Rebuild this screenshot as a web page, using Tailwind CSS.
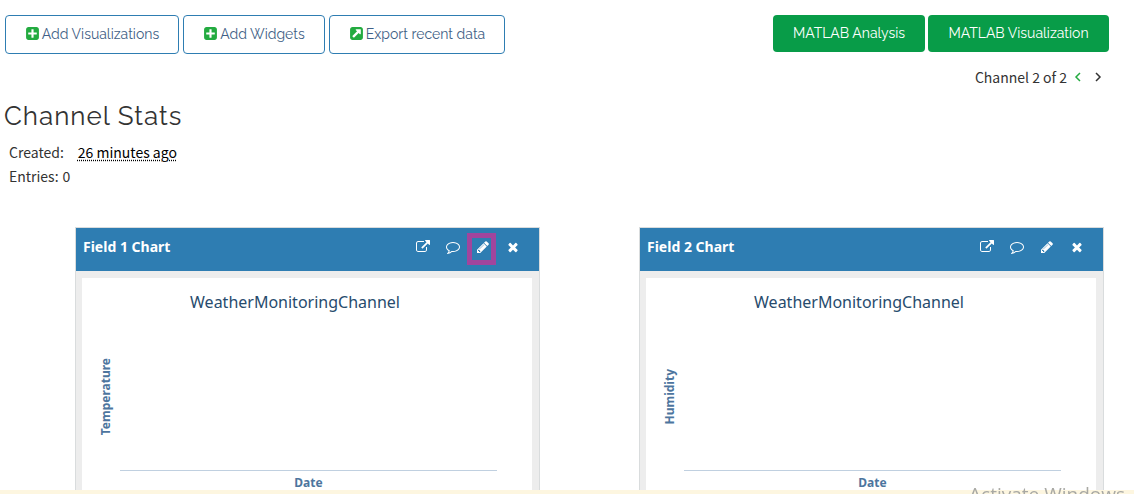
<!DOCTYPE html>
<html lang="en">
<head>
<meta charset="utf-8">
<meta name="viewport" content="width=device-width, initial-scale=1">
<title>Channel Stats</title>
<script src="https://cdn.jsdelivr.net/npm/@tailwindcss/browser@4"></script>
</head>
<body class="bg-white font-['Noto_Sans_CJK_SC','Noto_Sans',sans-serif] text-[14px] leading-6 text-[#333]">
<svg class="hidden" aria-hidden="true">
  <symbol id="plus-square" viewBox="0 0 1792 1792"><path d="M1408 960v-128q0-26-19-45t-45-19h-320v-320q0-26-19-45t-45-19h-128q-26 0-45 19t-19 45v320h-320q-26 0-45 19t-19 45v128q0 26 19 45t45 19h320v320q0 26 19 45t45 19h128q26 0 45-19t19-45v-320h320q26 0 45-19t19-45zm256-544v960q0 119-84.500 203.500t-203.500 84.500h-960q-119 0-203.500-84.500t-84.500-203.500v-960q0-119 84.500-203.500t203.500-84.500h960q119 0 203.500 84.500t84.500 203.500z"/></symbol>
  <symbol id="export-square" viewBox="0 0 1792 1792"><path d="M1408 928v-480q0-26-19-45t-45-19h-480q-42 0-59 39-17 41 14 70l144 144-534 534q-19 19-19 45t19 45l102 102q19 19 45 19t45-19l534-534 144 144q18 19 45 19 12 0 25-5 39-17 39-59zm256-512v960q0 119-84.500 203.500t-203.500 84.500h-960q-119 0-203.500-84.500t-84.500-203.500v-960q0-119 84.500-203.500t203.500-84.500h960q119 0 203.500 84.500t84.500 203.500z"/></symbol>
  <symbol id="external-link" viewBox="0 0 1792 1792"><path d="M1408 928v320q0 119-84.500 203.500t-203.500 84.500h-832q-119 0-203.500-84.500t-84.500-203.500v-832q0-119 84.500-203.500t203.500-84.500h704q14 0 23 9t9 23v64q0 14-9 23t-23 9h-704q-66 0-113 47t-47 113v832q0 66 47 113t113 47h832q66 0 113-47t47-113v-320q0-14 9-23t23-9h64q14 0 23 9t9 23zm384-864v512q0 26-19 45t-45 19-45-19l-176-176-652 652q-10 10-23 10t-23-10l-114-114q-10-10-10-23t10-23l652-652-176-176q-19-19-19-45t19-45 45-19h512q26 0 45 19t19 45z"/></symbol>
  <symbol id="comment" viewBox="0 0 1792 1792"><path d="M896 384q-204 0-381.500 69.500t-282 187.500-104.500 255q0 112 71.500 213.500t201.500 175.500l87 50-27 96q-24 91-70 172 152-63 275-171l43-38 57 6q69 8 130 8 204 0 381.500-69.500t282-187.500 104.500-255-104.500-255-282-187.500-381.500-69.500zm896 512q0 174-120 321.500t-326 233-450 85.500q-70 0-145-8-198 175-460 242-49 14-114 22h-5q-15 0-27-10.500t-16-27.500v-1q-3-4-.5-12t2-10 4.500-9.500l6-9 7-8.500 8-9q7-8 31-34.500t34.500-38 31-39.500 32.500-51 27-59 26-76q-157-89-247.500-220t-90.500-281q0-174 120-321.500t326-233 450-85.500 450 85.500 326 233 120 321.500z"/></symbol>
  <symbol id="pencil" viewBox="0 0 1792 1792"><path d="M491 1536l91-91-235-235-91 91v107h128v128h107zm523-928q0-22-22-22-10 0-17 7l-542 542q-7 7-7 17 0 22 22 22 10 0 17-7l542-542q7-7 7-17zm-54-192l416 416-832 832h-416v-416zm683 96q0 53-37 90l-166 166-416-416 166-165q36-38 90-38 53 0 91 38l235 234q37 39 37 91z"/></symbol>
  <symbol id="times" viewBox="0 0 1792 1792"><path d="M1490 1322q0 40-28 68l-136 136q-28 28-68 28t-68-28l-294-294-294 294q-28 28-68 28t-68-28l-136-136q-28-28-28-68t28-68l294-294-294-294q-28-28-28-68t28-68l136-136q28-28 68-28t68 28l294 294 294-294q28-28 68-28t68 28l136 136q28 28 28 68t-28 68l-294 294 294 294q28 28 28 68z"/></symbol>
</svg>

<header class="flex items-start justify-between pt-[15px] pr-[25px] pl-[5px] font-[Raleway,Lato,sans-serif] text-[14px] leading-5">
  <div class="flex gap-1">
    <button class="flex h-[39px] w-[174px] items-center justify-center gap-0.5 rounded border border-[#2e7db2] pb-0.5 whitespace-nowrap text-[#3f5f86]"><svg class="size-[15px] fill-[#23ab40]"><use href="#plus-square"/></svg>Add Visualizations</button>
    <button class="flex h-[39px] w-[142px] items-center justify-center gap-0.5 rounded border border-[#2e7db2] pb-0.5 whitespace-nowrap text-[#3f5f86]"><svg class="size-[15px] fill-[#23ab40]"><use href="#plus-square"/></svg>Add Widgets</button>
    <button class="flex h-[39px] w-[176px] items-center justify-center gap-0.5 rounded border border-[#2e7db2] pb-0.5 whitespace-nowrap text-[#3f5f86]"><svg class="size-[15px] fill-[#23ab40]"><use href="#export-square"/></svg>Export recent data</button>
  </div>
  <div class="flex gap-[3px]">
    <button class="h-[37px] w-[152px] rounded bg-[#089c48] pb-0.5 whitespace-nowrap text-white">MATLAB Analysis</button>
    <button class="h-[37px] w-[181px] rounded bg-[#089c48] pb-0.5 whitespace-nowrap text-white">MATLAB Visualization</button>
  </div>
</header>

<nav class="flex items-center justify-end pt-[11px] pr-[32px]" aria-label="Channels">
  <span>Channel 2 of 2</span>
  <a href="#" aria-label="Previous channel" class="ml-[7px]"><svg class="h-[10px] w-[8px] fill-none stroke-[#23ab40] stroke-[1.5]" viewBox="0 0 8 10"><path d="M6 1L2 5l4 4"/></svg></a>
  <a href="#" aria-label="Next channel" class="ml-[12px]"><svg class="h-[10px] w-[8px] fill-none stroke-[#333] stroke-[1.5]" viewBox="0 0 8 10"><path d="M2 1l4 4-4 4"/></svg></a>
</nav>

<section class="pt-[12px] pl-1">
  <h1 class="font-[Raleway,Lato,sans-serif] text-[26px] leading-[30px] tracking-[1px]">Channel Stats</h1>
  <dl class="pt-[9px] pl-[5px]">
    <div class="flex gap-[14px]"><dt>Created:</dt><dd><abbr title="Creation time" class="text-black underline decoration-dotted underline-offset-2">26 minutes ago</abbr></dd></div>
    <div class="flex gap-1"><dt>Entries:</dt><dd>0</dd></div>
  </dl>
</section>

<main class="grid grid-cols-2 gap-[99px] pt-[39px] pr-[30px] pl-[75px]">
  <article class="border border-[#d9dcdd] bg-[#ededed]">
    <header class="flex h-[43px] items-start justify-between bg-[#2e7db2] pr-[19px] pl-[7px] text-white">
      <h2 class="pt-[7px] font-['Noto_Sans',sans-serif] text-[14px] leading-6 font-bold">Field 1 Chart</h2>
      <div class="flex gap-4 pt-[12px]">
        <button aria-label="Open chart"><svg class="size-[14px] fill-white"><use href="#external-link"/></svg></button>
        <button aria-label="Comments"><svg class="size-[14px] fill-white"><use href="#comment"/></svg></button>
        <button aria-label="Edit chart" class="relative"><svg class="size-[14px] fill-white"><use href="#pencil"/></svg><span class="absolute -top-[7px] -left-[9px] h-8 w-[29px] border-[5px] border-[#a1459d]"></span></button>
        <button aria-label="Close chart"><svg class="size-[14px] fill-white"><use href="#times"/></svg></button>
      </div>
    </header>
    <div class="pt-[7px] pr-[7px] pl-[6px]">
      <div class="h-[214px] bg-white font-['Noto_Sans',sans-serif]">
        <h3 class="pt-[12px] pr-6 text-center text-[16px] leading-6 text-[#274b6d]">WeatherMonitoringChannel</h3>
        <div class="flex h-[157px] pr-[35px]">
          <div class="flex w-[38px] items-center justify-end pt-[8px] pr-[6px]"><span class="rotate-180 text-[12px] leading-4 font-bold text-[#4d759e] [writing-mode:vertical-rl]">Temperature</span></div>
          <div class="flex-1 border-b border-[#c0d0e0]"></div>
        </div>
        <p class="pt-[4px] pr-[35px] pl-[38px] text-center text-[12px] leading-4 font-bold text-[#4d759e]">Date</p>
      </div>
    </div>
  </article>
  <article class="border border-[#d9dcdd] bg-[#ededed]">
    <header class="flex h-[43px] items-start justify-between bg-[#2e7db2] pr-[19px] pl-[7px] text-white">
      <h2 class="pt-[7px] font-['Noto_Sans',sans-serif] text-[14px] leading-6 font-bold">Field 2 Chart</h2>
      <div class="flex gap-4 pt-[12px]">
        <button aria-label="Open chart"><svg class="size-[14px] fill-white"><use href="#external-link"/></svg></button>
        <button aria-label="Comments"><svg class="size-[14px] fill-white"><use href="#comment"/></svg></button>
        <button aria-label="Edit chart"><svg class="size-[14px] fill-white"><use href="#pencil"/></svg></button>
        <button aria-label="Close chart"><svg class="size-[14px] fill-white"><use href="#times"/></svg></button>
      </div>
    </header>
    <div class="pt-[7px] pr-[7px] pl-[6px]">
      <div class="h-[214px] bg-white font-['Noto_Sans',sans-serif]">
        <h3 class="pt-[12px] pr-6 text-center text-[16px] leading-6 text-[#274b6d]">WeatherMonitoringChannel</h3>
        <div class="flex h-[157px] pr-[35px]">
          <div class="flex w-[38px] items-center justify-end pt-[8px] pr-[6px]"><span class="rotate-180 text-[12px] leading-4 font-bold text-[#4d759e] [writing-mode:vertical-rl]">Humidity</span></div>
          <div class="flex-1 border-b border-[#c0d0e0]"></div>
        </div>
        <p class="pt-[4px] pr-[35px] pl-[38px] text-center text-[12px] leading-4 font-bold text-[#4d759e]">Date</p>
      </div>
    </div>
  </article>
</main>

<div class="fixed inset-x-0 bottom-0 h-1 bg-[#fdf6e0]"></div>
<div class="fixed right-[9px] bottom-0 h-[9px] overflow-hidden font-['Open_Sans',sans-serif] text-[19px] leading-6 whitespace-nowrap text-[#a9a9a4]"><p class="-mt-[3px]">Activate Windows</p></div>
</body>
</html>
